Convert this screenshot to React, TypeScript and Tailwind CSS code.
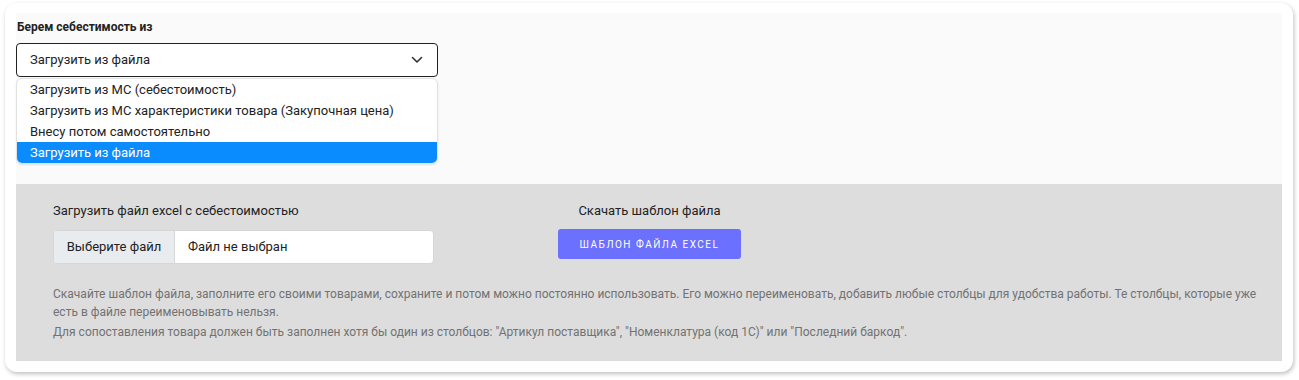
import React from "react";

export default function App() {
  const options = [
    "Загрузить из МС (себестоимость)",
    "Загрузить из МС характеристики товара (Закупочная цена)",
    "Внесу потом самостоятельно",
    "Загрузить из файла",
  ];
  return (
    <div className="w-[1299px] h-[380px] bg-white pl-[5px] pt-[3px]" style={{ fontFamily: "Roboto, 'Noto Sans', sans-serif" }}>
      <div className="w-[1288px] h-[369px] rounded-[12px] bg-white shadow-[1px_2px_4px_rgba(0,0,0,0.25)] px-[11px] pt-[10px]">
        <div className="bg-[#fafafa] h-[171px] pt-[6px] pl-[1px]">
          <div className="text-[12px] font-bold text-[#222] leading-[16px]">Берем себестимость из</div>
          <div className="relative mt-[8px] w-[422px] -ml-[1px]">
            <div className="h-[34px] border border-[#222] rounded-[4px] bg-white flex items-center justify-between pl-[13px] pr-[14px] text-[13px] text-[#222]">
              <span>Загрузить из файла</span>
              <svg width="12" height="8" viewBox="0 0 12 8" fill="none" stroke="#333" strokeWidth="1.6" strokeLinecap="round" strokeLinejoin="round">
                <path d="M1.5 1.5 L6 6 L10.5 1.5" />
              </svg>
            </div>
            <div className="absolute left-0 top-[35px] w-[422px] bg-white rounded-[6px] border border-[#e2e2e2] shadow-[0_1px_2px_rgba(0,0,0,0.1)] overflow-hidden">
              {options.map((o, i) => (
                <div
                  key={o}
                  className={
                    "h-[21px] leading-[21px] pl-[13px] text-[13px] " +
                    (i === 3 ? "bg-[#0a8cff] text-white" : "text-[#222]")
                  }
                >
                  {o}
                </div>
              ))}
            </div>
          </div>
        </div>
        <div className="bg-[#dddddd] h-[177px] pl-[37px] pt-[18px]">
          <div className="flex">
            <div className="w-[381px]">
              <div className="text-[13px] text-[#222] leading-[18px]">Загрузить файл excel с себестоимостью</div>
              <div className="mt-[10px] h-[34px] flex rounded-[4px] border border-[#d6d6d6] bg-white overflow-hidden text-[13px] text-[#222]">
                <div className="w-[121px] bg-[#e9ecef] border-r border-[#d6d6d6] flex items-center justify-center">Выберите файл</div>
                <div className="flex items-center pl-[13px]">Файл не выбран</div>
              </div>
            </div>
            <div className="ml-[124px] w-[183px] flex flex-col items-center">
              <div className="text-[13px] text-[#222] leading-[18px]">Скачать шаблон файла</div>
              <button className="mt-[9px] w-[183px] h-[30px] rounded-[3px] bg-[#6b70ff] text-white text-[10px] tracking-[1.5px] uppercase">
                Шаблон файла excel
              </button>
            </div>
          </div>
          <div className="mt-[21px] text-[12px] text-[#727272] leading-[18px] pr-[14px]">
            <p>Скачайте шаблон файла, заполните его своими товарами, сохраните и потом можно постоянно использовать. Его можно переименовать, добавить любые столбцы для удобства работы. Те столбцы, которые уже есть в файле переименовывать нельзя.</p>
            <p className="mt-[2px]">Для сопоставления товара должен быть заполнен хотя бы один из столбцов: "Артикул поставщика", "Номенклатура (код 1С)" или "Последний баркод".</p>
          </div>
        </div>
      </div>
    </div>
  );
}
